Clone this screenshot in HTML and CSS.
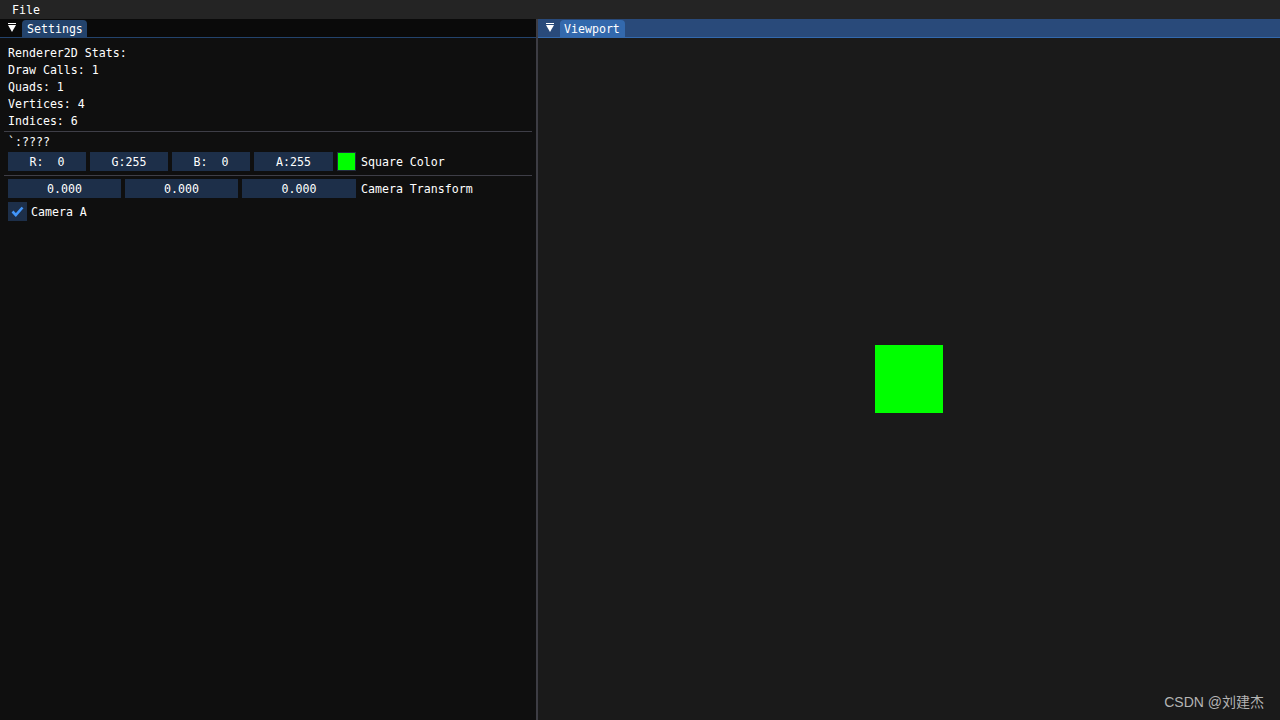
FILE: index.html
```html
<!DOCTYPE html>
<html>
<head>
<meta charset="utf-8">
<link rel="stylesheet" href="styles.css">
</head>
<body>
<div class="menubar"><span class="menu-item">File</span></div>
<div class="dock">
  <div class="panel settings">
    <div class="titlebar">
      <svg class="winmenu" width="8" height="10" viewBox="0 0 8 10"><rect x="0" y="0" width="8" height="1" fill="#fff"/><polygon points="0,2 8,2 4,9" fill="#fff"/></svg>
      <div class="tab">Settings</div>
    </div>
    <div class="content">
      <div class="line">Renderer2D Stats:</div>
      <div class="line">Draw Calls: 1</div>
      <div class="line">Quads: 1</div>
      <div class="line">Vertices: 4</div>
      <div class="line">Indices: 6</div>
      <div class="sep"></div>
      <div class="line">`:????</div>
      <div class="row">
        <div class="frame w4">R:  0</div>
        <div class="frame w4">G:255</div>
        <div class="frame w4">B:  0</div>
        <div class="frame w4 wlast">A:255</div>
        <div class="swatch"></div>
        <div class="label">Square Color</div>
      </div>
      <div class="sep"></div>
      <div class="row">
        <div class="frame w3">0.000</div>
        <div class="frame w3">0.000</div>
        <div class="frame w3 w3last">0.000</div>
        <div class="label">Camera Transform</div>
      </div>
      <div class="row">
        <div class="checkbox"><svg width="19" height="19" viewBox="0 0 19 19"><polyline points="4.5,9.5 7.8,13 14.5,5.5" fill="none" stroke="#4296fa" stroke-width="2.6" stroke-linejoin="miter" stroke-linecap="butt"/></svg></div>
        <div class="label cb-label">Camera A</div>
      </div>
    </div>
  </div>
  <div class="splitter"></div>
  <div class="panel viewport">
    <div class="titlebar active">
      <svg class="winmenu" width="8" height="10" viewBox="0 0 8 10"><rect x="0" y="0" width="8" height="1" fill="#fff"/><polygon points="0,2 8,2 4,9" fill="#fff"/></svg>
      <div class="tab">Viewport</div>
    </div>
    <div class="scene">
      <div class="quad"></div>
    </div>
  </div>
</div>
<div class="watermark">CSDN @刘建杰</div>
</body>
</html>
```
FILE: styles.css
```css
html, body {
  margin: 0;
  padding: 0;
  width: 1280px;
  height: 720px;
  overflow: hidden;
  background: #1a1a1a;
  color: #ffffff;
  font-family: "DejaVu Sans Mono", "Liberation Mono", monospace;
  font-size: 11.6px;
}
.menubar {
  height: 19px;
  background: #242424;
  line-height: 21px;
  padding-left: 12px;
  overflow: hidden;
}
.dock {
  display: flex;
  height: 701px;
}
.panel {
  display: flex;
  flex-direction: column;
}
.settings {
  width: 536px;
  background: #0f0f0f;
}
.splitter {
  width: 2px;
  background: #3d3d44;
}
.viewport {
  flex: 1;
}
.titlebar {
  height: 18px;
  border-bottom: 1px solid #23436c;
  background: #0a0a0a;
  display: flex;
  align-items: flex-start;
  padding-left: 8px;
}
.titlebar.active {
  background: #294a7a;
  border-bottom-color: #3369ad;
}
.winmenu {
  margin-top: 4px;
  margin-right: 6px;
  display: block;
}
.tab {
  margin-top: 1px;
  height: 17px;
  line-height: 19px;
  overflow: hidden;
  width: 56px;
  padding: 0 4px 0 5px;
  background: #23436c;
  border-radius: 4px 4px 0 0;
}
.titlebar.active .tab {
  background: #3369ad;
  padding: 0 5px 0 4px;
}
.content {
  padding: 8px 4px 0 4px;
  display: flex;
  flex-direction: column;
  gap: 4px;
}
.line {
  height: 13px;
  line-height: 15px;
  padding-left: 4px;
  white-space: pre;
}
.sep {
  height: 1px;
  background: #3e3e47;
  margin-bottom: -1px;
}
.row {
  display: flex;
  gap: 4px;
  align-items: flex-start;
  padding-left: 4px;
  height: 19px;
}
.frame {
  height: 19px;
  line-height: 21px;
  overflow: hidden;
  background: #1d2f49;
  text-align: center;
  white-space: pre;
}
.w4 { width: 78px; }
.wlast { width: 79px; }
.w3 { width: 113px; }
.w3last { width: 114px; }
.swatch {
  width: 17px;
  height: 17px;
  background: #00ff00;
  border: 1px solid #222c40;
}
.label {
  height: 19px;
  line-height: 21px;
  margin-left: 1px;
  white-space: pre;
}
.checkbox {
  width: 19px;
  height: 19px;
  background: #1d2f49;
}
.checkbox svg {
  display: block;
}
.cb-label {
  margin-left: 0;
}
.scene {
  flex: 1;
  background: #1a1a1a;
  display: flex;
  align-items: center;
  justify-content: center;
}
.quad {
  width: 68px;
  height: 68px;
  background: #00ff00;
}
.watermark {
  position: absolute;
  right: 16px;
  bottom: 9px;
  color: #b4b4b4;
  font-family: "Liberation Sans", "Noto Sans CJK SC", sans-serif;
  font-size: 14px;
}
```
